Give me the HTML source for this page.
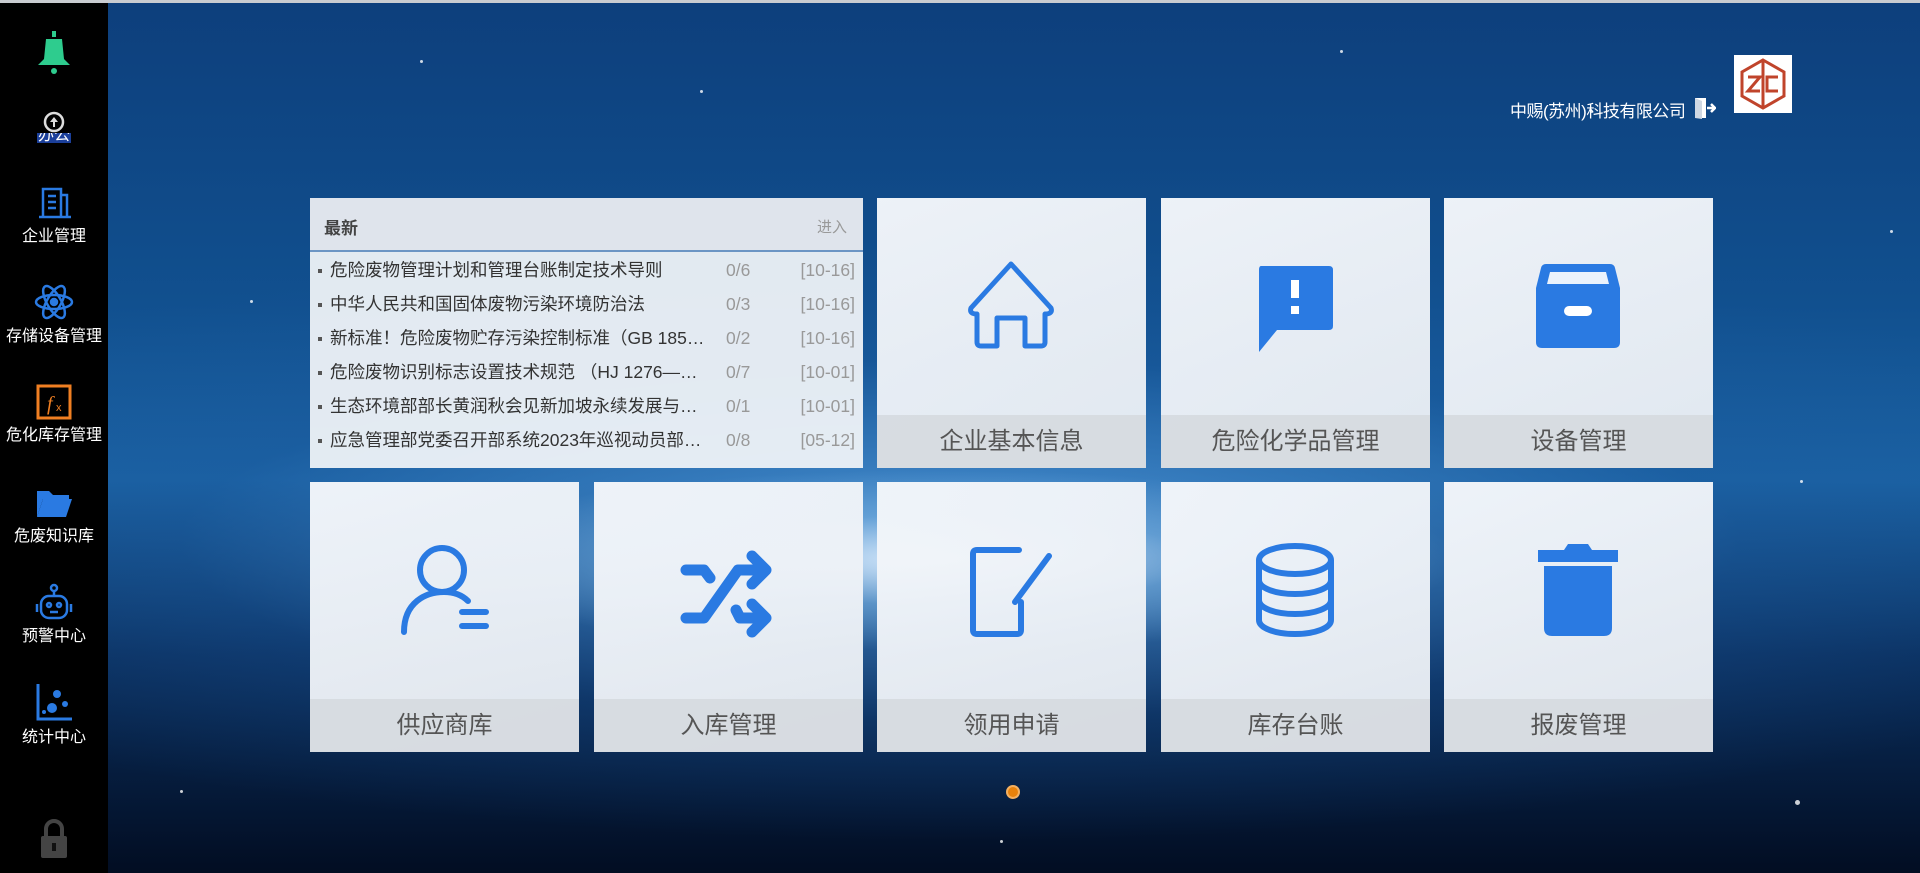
<!DOCTYPE html>
<html><head><meta charset="utf-8"><style>
*{margin:0;padding:0;box-sizing:border-box}
body{width:1920px;height:873px;overflow:hidden;font-family:"Liberation Sans","Noto Sans CJK SC",sans-serif;position:relative;
background:
radial-gradient(ellipse 520px 90px at 940px 560px,rgba(225,240,255,.95),rgba(150,200,240,.4) 50%,rgba(0,0,0,0) 100%),
radial-gradient(ellipse 1300px 300px at 960px 540px,rgba(90,160,225,.75),rgba(30,90,160,.3) 60%,rgba(0,0,0,0) 100%),
linear-gradient(180deg,#0d3f7c 0%,#11508f 35%,#1a62a3 55%,#0a2f5e 75%,#020d22 100%);}
.top{position:absolute;left:0;top:0;width:1920px;height:3px;background:#c9ccd0}
.side{position:absolute;left:0;top:3px;width:108px;height:870px;background:#000}
.si{position:absolute;left:0;width:108px;text-align:center;color:#fff;font-size:16px}
.si svg{display:block;margin:0 auto}
.star{position:absolute;width:3px;height:3px;border-radius:50%;background:#fff;opacity:.8}
.news{position:absolute;left:310px;top:198px;width:553px;height:270px;background:rgba(238,242,247,.95)}
.news .hd{height:54px;background:rgba(222,228,235,.95);border-bottom:2px solid #6b95c4;position:relative}
.news .hd b{position:absolute;left:14px;top:16px;font-size:17px;color:#444}
.news .hd span{position:absolute;right:16px;top:18px;font-size:15px;color:#999}
.row{position:relative;height:34px;font-size:17.5px;color:#333;line-height:34px}
.row .t{position:absolute;left:8px;}
.row .t:before{content:"";display:inline-block;width:4px;height:4px;background:#555;margin-right:8px;vertical-align:middle}
.row .c{position:absolute;left:416px;color:#999}
.row .d{position:absolute;right:8px;color:#999}
.tile{position:absolute;width:269px;height:270px;background:linear-gradient(160deg,rgba(244,247,251,.97),rgba(232,237,243,.96))}
.tile .lb{position:absolute;left:0;bottom:0;width:100%;height:53px;background:rgba(214,218,224,.92);text-align:center;line-height:53px;font-size:24px;color:#555}
.tile svg{position:absolute;left:84px;top:58px;width:100px;height:100px}
</style></head><body>
<div class="top"></div>
<div class="star" style="left:420px;top:60px"></div><div class="star" style="left:700px;top:90px"></div>
<div class="star" style="left:1340px;top:50px"></div><div class="star" style="left:1890px;top:230px"></div>
<div class="star" style="left:1795px;top:800px;width:5px;height:5px"></div><div class="star" style="left:180px;top:790px"></div>
<div class="star" style="left:1590px;top:110px"></div><div class="star" style="left:250px;top:300px"></div>
<div class="star" style="left:1800px;top:480px"></div><div class="star" style="left:1000px;top:840px"></div>
<div class="side">
<div class="si" style="top:28px"><svg width="36" height="44" viewBox="0 0 36 44"><rect x="16" y="0" width="4" height="6" fill="#2ecc8e"/><path d="M10 8h16l2 20 6 6H2l6-6z" fill="#2ecc8e"/><circle cx="18" cy="40" r="3" fill="#2ecc8e"/></svg></div>
<div class="si" style="top:108px"><svg width="22" height="22" viewBox="0 0 22 22"><circle cx="11" cy="11" r="9" fill="none" stroke="#ddd" stroke-width="2.5"/><path d="M11 6l-4 5h3v5h2v-5h3z" fill="#ddd"/></svg><div style="height:10px;overflow:hidden;line-height:6px;margin:0 auto;width:34px;background:#1b3f9a;color:#fff;font-size:16px">办公</div></div>
<div class="si" style="top:180px"><svg width="34" height="36" viewBox="0 0 34 36"><path d="M6 34V6h18v28M24 12h6v22M2 34h32M11 13h8M11 19h8M11 25h8" fill="none" stroke="#2a7ae2" stroke-width="2.5"/></svg><div style="margin-top:3px">企业管理</div></div>
<div class="si" style="top:279px"><svg width="40" height="40" viewBox="0 0 40 40" fill="none" stroke="#2a7ae2" stroke-width="2.5"><ellipse cx="20" cy="20" rx="18" ry="7"/><ellipse cx="20" cy="20" rx="18" ry="7" transform="rotate(60 20 20)"/><ellipse cx="20" cy="20" rx="18" ry="7" transform="rotate(-60 20 20)"/><circle cx="20" cy="20" r="3" fill="#2a7ae2"/></svg><div style="margin-top:0px">存储设备管理</div></div>
<div class="si" style="top:381px"><svg width="36" height="36" viewBox="0 0 36 36"><rect x="2" y="2" width="32" height="32" fill="none" stroke="#f07f22" stroke-width="3"/><text x="11" y="26" font-size="20" font-style="italic" fill="#f07f22" font-family="Liberation Serif">f</text><text x="20" y="27" font-size="11" fill="#f07f22" font-family="Liberation Sans">x</text></svg><div style="margin-top:1px">危化库存管理</div></div>
<div class="si" style="top:484px"><svg width="38" height="32" viewBox="0 0 38 32"><path d="M2 4h12l4 4h16v4H8L2 30z" fill="#2a7ae2"/><path d="M8 12h29l-6 18H2z" fill="#2a7ae2"/></svg><div style="margin-top:3px">危废知识库</div></div>
<div class="si" style="top:580px"><svg width="40" height="40" viewBox="0 0 40 40" fill="none" stroke="#2a7ae2" stroke-width="2.5"><circle cx="20" cy="5" r="3"/><path d="M20 8v5"/><rect x="7" y="13" width="26" height="22" rx="8"/><path d="M3 21v8M37 21v8"/><circle cx="15" cy="22" r="2"/><circle cx="25" cy="22" r="2"/><path d="M16 29h8"/></svg><div style="margin-top:-1px">预警中心</div></div>
<div class="si" style="top:679px"><svg width="38" height="40" viewBox="0 0 38 40"><path d="M3 2v35h34" fill="none" stroke="#2a7ae2" stroke-width="3"/><circle cx="22" cy="12" r="4" fill="#2a7ae2"/><circle cx="17" cy="26" r="5" fill="#2a7ae2"/><circle cx="30" cy="22" r="3" fill="#2a7ae2"/><circle cx="9" cy="30" r="2" fill="#2a7ae2"/></svg><div style="margin-top:1px">统计中心</div></div>
<div class="si" style="top:815px"><svg width="30" height="42" viewBox="0 0 30 42"><path d="M7 18v-7a8 8 0 0116 0v7" fill="none" stroke="#444" stroke-width="4"/><rect x="2" y="18" width="26" height="22" rx="2" fill="#444"/><rect x="13" y="25" width="4" height="8" fill="#111"/></svg></div>
</div>
<div style="position:absolute;left:1510px;top:97px;color:#fff;font-size:17px;letter-spacing:-0.5px">中赐(苏州)科技有限公司</div>
<svg style="position:absolute;left:1692px;top:96px" width="24" height="24" viewBox="0 0 24 24"><path d="M3 2h11v20H3z" fill="#fff"/><path d="M3 2l7 3v18l-7-1z" fill="#cfd8e3"/><path d="M15 12h7M19 8l4 4-4 4" fill="none" stroke="#fff" stroke-width="2.5"/></svg>
<div style="position:absolute;left:1734px;top:55px;width:58px;height:58px;background:#fff">
<svg width="58" height="58" viewBox="0 0 58 58" fill="none" stroke="#c0442b" stroke-width="3"><path d="M29 5l21 12v24L29 53 8 41V17z"/><path d="M29 5v48"/><path d="M14 22h12l-12 14h12M44 22H33v14h11"/></svg></div>
<div class="news"><div class="hd"><b>最新</b><span>进入</span></div>
<div style="padding-top:1px">
<div class="row"><span class="t">危险废物管理计划和管理台账制定技术导则</span><span class="c">0/6</span><span class="d">[10-16]</span></div>
<div class="row"><span class="t">中华人民共和国固体废物污染环境防治法</span><span class="c">0/3</span><span class="d">[10-16]</span></div>
<div class="row"><span class="t">新标准！危险废物贮存污染控制标准（GB 185…</span><span class="c">0/2</span><span class="d">[10-16]</span></div>
<div class="row"><span class="t">危险废物识别标志设置技术规范 （HJ 1276—…</span><span class="c">0/7</span><span class="d">[10-01]</span></div>
<div class="row"><span class="t">生态环境部部长黄润秋会见新加坡永续发展与…</span><span class="c">0/1</span><span class="d">[10-01]</span></div>
<div class="row"><span class="t">应急管理部党委召开部系统2023年巡视动员部…</span><span class="c">0/8</span><span class="d">[05-12]</span></div>
</div></div>
<div class="tile" style="left:877px;top:198px"><svg viewBox="0 0 100 100" fill="none" stroke="#2a7ae2" stroke-width="5" stroke-linejoin="round" stroke-linecap="round"><path d="M50 8L10 52q-2 6 6 6V86q0 4 4 4h16V62h28v28h16q4 0 4-4V58q8 0 6-6z"/></svg><div class="lb">企业基本信息</div></div>
<div class="tile" style="left:1161px;top:198px"><svg viewBox="0 0 100 100"><path d="M16 10h68q4 0 4 4v56q0 4-4 4H32L14 96V14q0-4 2-4z" fill="#2a7ae2"/><rect x="46" y="24" width="8" height="18" fill="#fff"/><rect x="46" y="50" width="8" height="8" fill="#fff"/></svg><div class="lb">危险化学品管理</div></div>
<div class="tile" style="left:1444px;top:198px"><svg viewBox="0 0 100 100"><path d="M18 8h64q4 0 5 4l5 20v54q0 6-6 6H14q-6 0-6-6V32l5-20q1-4 5-4z" fill="#2a7ae2"/><path d="M22 16h56l3 12H19z" fill="#fff" opacity=".9"/><rect x="36" y="50" width="28" height="10" rx="5" fill="#fff"/></svg><div class="lb">设备管理</div></div>
<div class="tile" style="left:310px;top:482px"><svg viewBox="0 0 100 100" fill="none" stroke="#2a7ae2" stroke-width="6" stroke-linecap="round"><circle cx="48" cy="30" r="22"/><path d="M10 92c0-30 22-40 40-40 10 0 18 3 24 9"/><path d="M68 72h24M68 86h24"/></svg><div class="lb">供应商库</div></div>
<div class="tile" style="left:594px;top:482px"><svg viewBox="0 0 100 100" fill="none" stroke="#2a7ae2" stroke-width="11" stroke-linecap="round" stroke-linejoin="round"><path d="M8 30h18l6 8M8 78h18l34-48h28M74 16l14 14-14 14M58 70l4 8h26M74 64l14 14-14 14"/></svg><div class="lb">入库管理</div></div>
<div class="tile" style="left:877px;top:482px"><svg viewBox="0 0 100 100" fill="none" stroke="#2a7ae2" stroke-width="6" stroke-linecap="round" stroke-linejoin="round"><path d="M58 10H16q-4 0-4 4v76q0 4 4 4h40q4 0 4-4V62"/><path d="M88 16L54 62"/></svg><div class="lb">领用申请</div></div>
<div class="tile" style="left:1161px;top:482px"><svg viewBox="0 0 100 100" fill="none" stroke="#2a7ae2" stroke-width="6"><ellipse cx="50" cy="20" rx="36" ry="14"/><path d="M14 20v60c0 8 16 14 36 14s36-6 36-14V20M14 40c0 8 16 14 36 14s36-6 36-14M14 60c0 8 16 14 36 14s36-6 36-14"/></svg><div class="lb">库存台账</div></div>
<div class="tile" style="left:1444px;top:482px"><svg viewBox="0 0 100 100"><path d="M40 4h20l4 6H36z" fill="#2a7ae2"/><rect x="10" y="10" width="80" height="12" fill="#2a7ae2"/><path d="M16 26h68v62q0 8-8 8H24q-8 0-8-8z" fill="#2a7ae2"/></svg><div class="lb">报废管理</div></div>
<div style="position:absolute;left:1006px;top:785px;width:14px;height:14px;border-radius:50%;background:#e8820c;border:2px solid #f4b060"></div>
</body></html>
